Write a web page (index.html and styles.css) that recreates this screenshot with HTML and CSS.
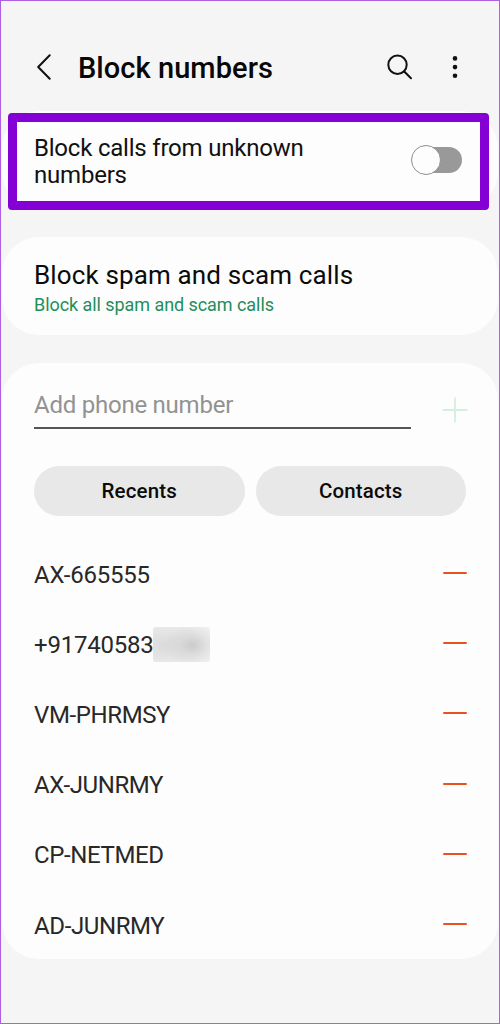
FILE: index.html
```html
<!DOCTYPE html>
<html lang="en">
<head>
<meta charset="utf-8">
<title>Block numbers</title>
<link rel="stylesheet" href="styles.css">
</head>
<body>
<main class="screen">
  <header class="bar">
    <svg class="back" width="16" height="28" viewBox="0 0 16 28" aria-label="Back"><path d="M14.7 2.2 3.2 14l11.5 11.8"/></svg>
    <h1 class="title"><span>Block numbers</span></h1>
    <svg class="search" width="28" height="28" viewBox="0 0 28 28" aria-label="Search"><circle cx="11.5" cy="11.8" r="9.2"/><path d="m18.2 18.5 6.8 6.8"/></svg>
    <svg class="more" width="6" height="24" viewBox="0 0 6 24" aria-label="More options"><circle cx="3" cy="3.4" r="2.3"/><circle cx="3" cy="12.1" r="2.3"/><circle cx="3" cy="20.8" r="2.3"/></svg>
  </header>
  <section class="card unknown">
    <p class="label">Block calls from unknown<br>numbers</p>
    <span class="toggle"><span class="knob"></span></span>
    <span class="highlight"></span>
  </section>
  <section class="card spam">
    <p class="spam-title"><span>Block spam and scam calls</span></p>
    <p class="spam-note"><span>Block all spam and scam calls</span></p>
  </section>
  <section class="card numbers">
    <div class="entry">
      <div class="field"><span>Add phone number</span></div>
      <svg class="plus" width="26" height="26" viewBox="0 0 26 26" aria-label="Add"><path d="M13 .6v24.8M.6 13h24.8"/></svg>
    </div>
    <div class="sources">
      <button class="source recents"><span>Recents</span></button>
      <button class="source contacts"><span>Contacts</span></button>
    </div>
    <ul class="list">
      <li class="row"><span class="name digits">AX-665555</span><i class="minus"></i></li>
      <li class="row"><span class="name digits">+91740583</span><span class="mask"></span><i class="minus"></i></li>
      <li class="row"><span class="name">VM-PHRMSY</span><i class="minus"></i></li>
      <li class="row"><span class="name">AX-JUNRMY</span><i class="minus"></i></li>
      <li class="row"><span class="name">CP-NETMED</span><i class="minus"></i></li>
      <li class="row"><span class="name">AD-JUNRMY</span><i class="minus"></i></li>
    </ul>
  </section>
</main>
</body>
</html>
```
FILE: styles.css
```css
* { box-sizing: border-box; margin: 0; padding: 0; }
body { font-family: Roboto, "Liberation Sans", sans-serif; color: #111; }
.screen {
  display: flex; flex-direction: column; gap: 28px;
  width: 500px; height: 1024px;
  background: #f5f5f5; border: 1px solid #ae60e0; overflow: hidden;
}
.bar { display: flex; align-items: center; height: 110px; margin-bottom: -28px; padding: 21px 39px 0 34px; }
.bar svg { fill: none; stroke: #111; stroke-width: 2; stroke-linecap: round; stroke-linejoin: round; flex: none; }
.title { flex: 1; margin-left: 27px; font-size: 29px; letter-spacing: .06px; font-weight: 500; line-height: 34px; white-space: nowrap; padding-top: 2px; color: #080808; }
.bar .search { margin-right: 38px; }
.bar .more { fill: #111; stroke: none; margin-right: 2px; }

.card { background: #fdfdfd; border-radius: 37px; margin: 0 1px; flex: none; }
.unknown { position: relative; display: flex; justify-content: space-between; align-items: center; height: 98px; padding: 0 36px 0 32px; }
.label { font-size: 24px; letter-spacing: -.21px; line-height: 27px; padding-top: 3px; white-space: nowrap; }
.toggle { position: relative; width: 46px; height: 26px; border-radius: 13px; background: #999; }
.knob { position: absolute; left: -5px; top: -2px; width: 30px; height: 30px; border-radius: 50%; background: #fdfdfd; border: 1px solid #8e8e8e; }
.highlight { position: absolute; left: 6px; top: 2px; width: 481px; height: 97px; border: 9px solid #8500d4; border-radius: 4px; }

.spam { height: 98px; padding: 21px 32px 0; white-space: nowrap; }
.spam-title { font-size: 26px; letter-spacing: .14px; line-height: 34px; color: #0b0b0b; }
.spam-note { font-size: 18px; letter-spacing: -.06px; line-height: 24px; color: #238e5b; padding-top: 1px; }

.numbers { height: 596px; padding: 24px 32px 0; }
.entry { display: flex; justify-content: space-between; align-items: flex-start; }
.field { width: 377px; height: 42px; border-bottom: 2px solid #555; font-size: 24px; letter-spacing: -.24px; line-height: 36px; color: #929292; }
.plus { stroke: #d3efdf; stroke-width: 1.8; fill: none; margin-top: 10px; margin-right: -2px; }
.sources { display: flex; gap: 11px; margin-top: 37px; }
.source { width: 210.5px; height: 50px; border: 0; border-radius: 25px; background: #e8e8e8; font: 500 20.5px/49px Roboto, "Liberation Sans", sans-serif; letter-spacing: .15px; color: #0b0b0b; }
.list { list-style: none; padding-top: 22px; }
.row { display: flex; align-items: center; height: 70.2px; font-size: 24px; line-height: 32px; color: #282828; }
.name { padding-top: 3px; letter-spacing: -.38px; }
.digits { letter-spacing: -.22px; }
.minus { width: 24px; height: 2px; margin-left: auto; margin-right: -1px; background: #e5531f; border-radius: 1px; }
.mask {
  width: 57px; height: 35px; border-radius: 2px; margin-left: -1px; margin-top: 2px;
  background: radial-gradient(ellipse 28px 21px at 39px 18px, #cbcbcb 0, rgba(211,211,211,.6) 45%, rgba(235,235,235,0) 100%),
    radial-gradient(ellipse 42px 28px at 12px 18px, #dadada 0, #f0f0f0 100%);
}
```
